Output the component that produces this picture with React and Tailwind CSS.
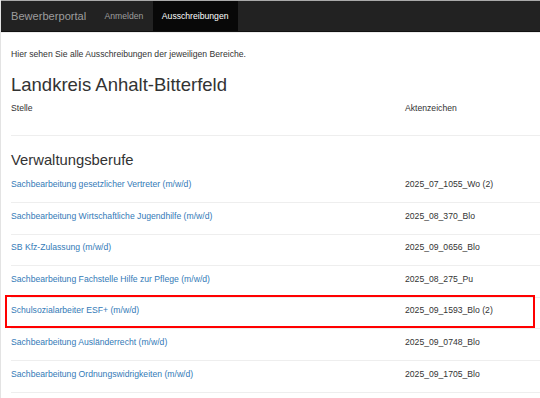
const rows = [
  { title: 'Sachbearbeitung gesetzlicher Vertreter (m/w/d)', ref: '2025_07_1055_Wo (2)' },
  { title: 'Sachbearbeitung Wirtschaftliche Jugendhilfe (m/w/d)', ref: '2025_08_370_Blo' },
  { title: 'SB Kfz-Zulassung (m/w/d)', ref: '2025_09_0656_Blo' },
  { title: 'Sachbearbeitung Fachstelle Hilfe zur Pflege (m/w/d)', ref: '2025_08_275_Pu' },
  { title: 'Schulsozialarbeiter ESF+ (m/w/d)', ref: '2025_09_1593_Blo (2)', marked: true },
  { title: 'Sachbearbeitung Ausländerrecht (m/w/d)', ref: '2025_09_0748_Blo' },
  { title: 'Sachbearbeitung Ordnungswidrigkeiten (m/w/d)', ref: '2025_09_1705_Blo' },
];

const App = () => {
  return (
    <div className="w-[540px] h-[398px] overflow-hidden bg-white border-l border-[#e3e3e3] font-['Liberation_Sans',Arial,sans-serif] text-[#333] text-[8.65px] leading-[12.36px]">
      <nav className="h-[32px] bg-[#222] border-t border-[#aaa] border-b border-b-[#111] flex items-stretch">
        <div className="pl-[10px] pr-[9px] flex items-center text-[11.1px] text-[#9d9d9d]">Bewerberportal</div>
        <a className="px-[9.25px] flex items-center text-[#9d9d9d]">Anmelden</a>
        <a className="px-[9.25px] flex items-center bg-[#080808] text-white">Ausschreibungen</a>
      </nav>
      <div className="h-px bg-[#ececec]" />

      <div className="pl-[10px]">
        <p className="mt-[14.8px]">Hier sehen Sie alle Ausschreibungen der jeweiligen Bereiche.</p>
        <h2 className="mt-[14.9px] text-[18.5px] leading-[20.35px]">Landkreis Anhalt-Bitterfeld</h2>

        <div className="grid grid-cols-[394px_1fr] mt-[6.4px] pb-[20.8px] border-b border-[#eeeeee]">
          <div>Stelle</div>
          <div>Aktenzeichen</div>
        </div>

        <h3 className="mt-[16.4px] text-[14.8px] leading-[16.3px]">Verwaltungsberufe</h3>

        <div className="mt-[2.9px]">
          {rows.map((r) => (
            <div
              key={r.ref}
              className="relative grid grid-cols-[394px_1fr] h-[31.6px] pt-[6.5px] border-b border-[#eeeeee]"
            >
              <a className="text-[#337ab7]">{r.title}</a>
              <div>{r.ref}</div>
              {r.marked && (
                <div className="absolute left-[-6px] right-[5px] top-[-3.3px] bottom-[0.5px] border-2 border-[#f00]" />
              )}
            </div>
          ))}
        </div>
      </div>
    </div>
  );
};

export default App;
